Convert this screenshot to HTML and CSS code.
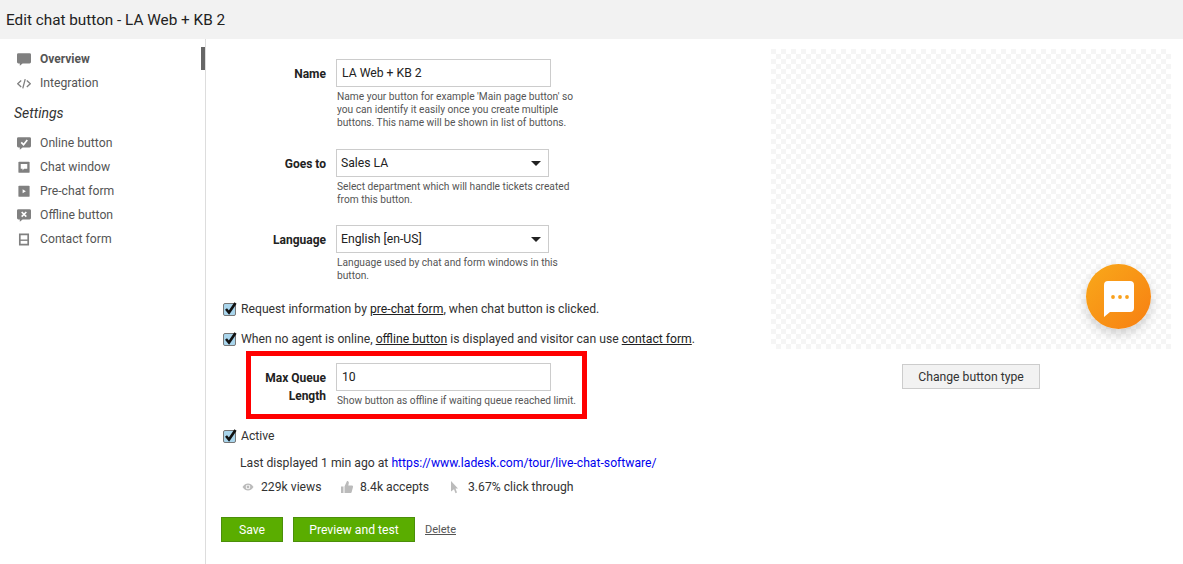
FILE: index.html
```html
<!DOCTYPE html>
<html lang="en">
<head>
<meta charset="utf-8">
<title>Edit chat button</title>
<link rel="stylesheet" href="styles.css">
</head>
<body>
<header class="top"><h1 class="title">Edit chat button - LA Web + KB 2</h1></header>
<div class="shell">
  <nav class="side">
    <a class="nav-item active"><svg class="ico" viewBox="0 0 15 13.500"><path d="M1.500 0h12A1.500 1.500 0 0 1 15 1.500v8a1.500 1.500 0 0 1-1.500 1.500H6L3 13.500V11H1.500A1.500 1.500 0 0 1 0 9.500v-8A1.500 1.500 0 0 1 1.500 0z"/></svg><span>Overview</span></a>
    <a class="nav-item"><svg class="ico" viewBox="0 0 15 13.500"><path d="M4.500 3.500 .8 7l3.700 3.500M10.500 3.500 14.200 7l-3.700 3.500M8.800 2l-2.600 10" fill="none" stroke="#808080" stroke-width="1.400"/></svg><span>Integration</span></a>
    <div class="nav-head">Settings</div>
    <a class="nav-item"><svg class="ico" viewBox="0 0 15 13.500"><path d="M1.500 0h12A1.500 1.500 0 0 1 15 1.500v8a1.500 1.500 0 0 1-1.500 1.500H6L3 13.500V11H1.500A1.500 1.500 0 0 1 0 9.500v-8A1.500 1.500 0 0 1 1.500 0z"/><path d="M4.500 5.500 7 8l4-5" fill="none" stroke="#fff" stroke-width="1.800"/></svg><span>Online button</span></a>
    <a class="nav-item"><svg class="ico" viewBox="0 0 15 13.500"><rect x="1.500" y="0.500" width="12" height="12" rx="1"/><path d="M4 3h7v5H7.500L6 10V8H4z" fill="#fff"/></svg><span>Chat window</span></a>
    <a class="nav-item"><svg class="ico" viewBox="0 0 15 13.500"><rect x="1.500" y="0.500" width="12" height="12" rx="1"/><path d="M6 4.300 9.500 6.500 6 8.700z" fill="#fff"/></svg><span>Pre-chat form</span></a>
    <a class="nav-item"><svg class="ico" viewBox="0 0 15 13.500"><path d="M1.500 0h12A1.500 1.500 0 0 1 15 1.500v8a1.500 1.500 0 0 1-1.500 1.500H6L3 13.500V11H1.500A1.500 1.500 0 0 1 0 9.500v-8A1.500 1.500 0 0 1 1.500 0z"/><path d="M5 3 10 8M10 3 5 8" fill="none" stroke="#fff" stroke-width="1.700"/></svg><span>Offline button</span></a>
    <a class="nav-item"><svg class="ico" viewBox="0 0 15 13.500"><path d="M3 1.300h9v11H3z" fill="none" stroke="#808080" stroke-width="1.800"/><path d="M3 7.500h9" stroke="#808080" stroke-width="1.500"/></svg><span>Contact form</span></a>
    <span class="nav-marker"></span>
  </nav>
  <main class="content">
    <div class="form">
      <div class="row row-name">
        <label class="lbl">Name</label>
        <div class="field">
          <div class="input">LA Web + KB 2</div>
          <p class="help">Name your button for example 'Main page button' so you can identify it easily once you create multiple buttons. This name will be shown in list of buttons.</p>
        </div>
      </div>
      <div class="row row-goes">
        <label class="lbl">Goes to</label>
        <div class="field">
          <div class="select"><span>Sales LA</span><i class="caret"></i></div>
          <p class="help">Select department which will handle tickets created from this button.</p>
        </div>
      </div>
      <div class="row row-lang">
        <label class="lbl">Language</label>
        <div class="field">
          <div class="select"><span>English [en-US]</span><i class="caret"></i></div>
          <p class="help">Language used by chat and form windows in this button.</p>
        </div>
      </div>
      <div class="check check-1"><span class="box"><svg viewBox="0 0 14 14"><path d="M3 7l3 3.500L12.500 1" fill="none" stroke="#111" stroke-width="2.600"/></svg></span><span>Request information by <u>pre-chat form</u>, when chat button is clicked.</span></div>
      <div class="check check-2"><span class="box"><svg viewBox="0 0 14 14"><path d="M3 7l3 3.500L12.500 1" fill="none" stroke="#111" stroke-width="2.600"/></svg></span><span>When no agent is online, <u>offline button</u> is displayed and visitor can use <u>contact form</u>.</span></div>
      <div class="queue">
        <label class="lbl lbl-queue">Max Queue Length</label>
        <div class="field">
          <div class="input">10</div>
          <p class="help">Show button as offline if waiting queue reached limit.</p>
        </div>
      </div>
      <div class="check check-3"><span class="box"><svg viewBox="0 0 14 14"><path d="M3 7l3 3.500L12.500 1" fill="none" stroke="#111" stroke-width="2.600"/></svg></span><span>Active</span></div>
      <p class="last">Last displayed 1 min ago at <a class="url">https://www.ladesk.com/tour/live-chat-software/</a></p>
      <div class="stats">
        <span class="stat stat-views"><svg class="stat-ico" viewBox="0 0 12 8"><path d="M0.500 4C2 1.500 4 .5 6 .5s4 1 5.500 3.500C10 6.500 8 7.500 6 7.500S2 6.500.5 4z" fill="#bbb"/><circle cx="6" cy="4" r="2.300" fill="#fff"/><circle cx="6" cy="4" r="1.400" fill="#bbb"/></svg>229k views</span>
        <span class="stat stat-acc"><svg class="stat-ico-l" viewBox="0 0 12 12"><path d="M0 5.500h2.500V12H0zM3.500 5.500 6 0c1.300 0 2 .8 1.800 2L7.300 4.500H11c.8 0 1.200.7 1 1.400l-1.300 5.200c-.1.500-.5.900-1 .9h-6.200z" fill="#bbb"/></svg>8.4k accepts</span>
        <span class="stat"><svg class="stat-ico-c" viewBox="0 0 8 13"><path d="M0 0l7 7.500H4.500L6 11.500l-1.500.8L3 8.200 0 10.500z" fill="#bbb"/></svg>3.67% click through</span>
      </div>
      <div class="actions">
        <button class="btn btn-save">Save</button>
        <button class="btn btn-prev">Preview and test</button>
        <a class="del">Delete</a>
      </div>
    </div>
    <aside class="preview">
      <div class="canvas">
        <div class="bubble"><svg viewBox="0 0 30 36" class="bubble-ico"><path d="M4 0h22a4 4 0 0 1 4 4v23a4 4 0 0 1-4 4H6L0 36V4a4 4 0 0 1 4-4z" fill="#fff"/><circle cx="9" cy="16" r="1.900" fill="#f9a01b"/><circle cx="16" cy="16" r="1.900" fill="#f9a01b"/><circle cx="23" cy="16" r="1.900" fill="#f9a01b"/></svg></div>
      </div>
      <button class="change">Change button type</button>
    </aside>
  </main>
</div>
</body>
</html>
```
FILE: styles.css
```css
* { box-sizing: border-box; }
html, body { margin: 0; height: 100%; }
body { width: 1183px; height: 564px; overflow: hidden; background: #fff; font-family: Roboto, "Liberation Sans", sans-serif; color: #333; font-size: 13px; }
.top { height: 39px; background: #f2f2f2; display: flex; align-items: center; padding-left: 6px; }
.title { margin: 0; font-size: 15.300px; font-weight: 400; color: #222; }
.shell { display: flex; height: 525px; }
.side { position: relative; width: 206px; flex: none; border-right: 1px solid #ddd; padding: 8px 0 0 17px; }
.nav-item { display: flex; align-items: center; height: 24px; color: #555; font-size: 12.200px; }
.nav-item.active { font-weight: 700; font-size: 12px; }
.nav-item span { margin-left: 9px; }
.ico { width: 14px; height: 13px; fill: #808080; flex: none; }
.nav-head { font-style: italic; font-size: 14px; color: #333; margin: 6px 0 0 -3px; height: 30px; line-height: 24px; }
.nav-marker { position: absolute; right: 0; top: 8px; width: 4px; height: 23px; background: #666; }
.content { flex: 1; display: flex; min-width: 0; }
.form { width: 570px; flex: none; padding-left: 15px; }
.row { display: flex; }
.row-name { padding-top: 20px; height: 110px; }
.row-goes { height: 76px; }
.row-lang { height: 76px; }
.lbl { width: 105px; text-align: right; font-weight: 700; font-size: 12px; color: #222; padding-top: 7px; line-height: 17px; margin-right: 10px; flex: none; }
.field { width: 240px; }
.input { width: 215px; height: 28px; border: 1px solid #ccc; background: #fff; padding: 0 5px; line-height: 27px; font-size: 12.200px; color: #222; }
.select { width: 213px; height: 28px; border: 1px solid #ccc; background: #fff; padding: 0 4px; display: flex; align-items: center; justify-content: space-between; font-size: 12.200px; color: #222; }
.caret { width: 0; height: 0; border-left: 5px solid transparent; border-right: 5px solid transparent; border-top: 5px solid #222; margin-right: 3px; }
.help { margin: 3px 0 0 1px; font-size: 10.200px; line-height: 13px; color: #555; }
.check { display: flex; align-items: center; height: 16px; font-size: 12.200px; color: #333; }
.check u { color: #222; }
.check-1 { margin: 0 0 0 2px; }
.check-2 { margin: 14px 0 0 2px; }
.check-3 { margin: 9px 0 0 2px; }
.box { width: 13px; height: 13px; background: #a9d5ec; border: 1px solid #777; border-radius: 2px; margin-right: 5px; flex: none; display: flex; }
.box svg { width: 14px; height: 14px; margin: -2px 0 0 -1px; flex: none; }
.queue { display: flex; width: 341px; height: 68px; margin: 4px 0 0 25px; border: 5px solid #f00; padding-top: 7px; }
.lbl-queue { width: 75px; padding-top: 6px; line-height: 18px; }
.queue .help { margin-top: 3px; white-space: nowrap; }
.last { margin: 11px 0 0 19px; font-size: 12.200px; line-height: 16px; color: #333; }
.url { color: #00e; }
.stats { display: flex; margin: 8px 0 0 21px; font-size: 12.200px; line-height: 16px; color: #333; }
.stat { display: flex; align-items: center; }
.stat-views { width: 99px; }
.stat-acc { width: 110px; }
.stat-ico { width: 12px; height: 8px; margin-right: 7px; }
.stat-ico-l { width: 12px; height: 12px; margin-right: 7px; }
.stat-ico-c { width: 8px; height: 13px; margin-right: 9px; }
.actions { display: flex; align-items: center; margin: 22px 0 0 0; }
.btn { height: 25px; background: #5aad00; border: 1px solid #4b8f0a; color: #fff; font: 12.200px Roboto, "Liberation Sans", sans-serif; padding: 0; }
.btn-save { width: 62px; margin-right: 10px; }
.btn-prev { width: 122px; margin-right: 10px; }
.del { color: #555; font-size: 11px; text-decoration: underline; }
.preview { width: 400px; flex: none; margin-left: -5px; padding-top: 10px; display: flex; flex-direction: column; align-items: center; }
.canvas { position: relative; width: 400px; height: 300px; background-color: #fff; background-image: conic-gradient(#f5f5f5 25%, #fff 0 50%, #f5f5f5 0 75%, #fff 0); background-size: 10px 10px; background-position: 5px 0; }
.bubble { position: absolute; left: 315px; top: 215px; width: 65px; height: 65px; border-radius: 50%; background: linear-gradient(135deg, #f9a91a, #f77f12); box-shadow: 0 5px 12px rgba(0,0,0,.18); display: flex; align-items: center; justify-content: center; }
.bubble-ico { width: 30px; height: 36px; margin-top: 5px; }
.change { margin-top: 15px; width: 138px; height: 25px; background: #f2f2f2; border: 1px solid #ccc; font: 12.200px Roboto, "Liberation Sans", sans-serif; color: #333; padding: 0; }
```
